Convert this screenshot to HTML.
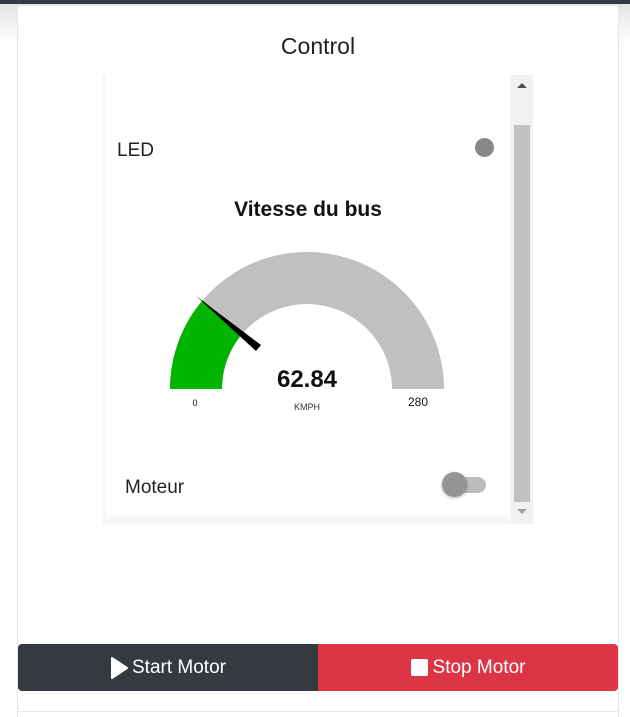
<!DOCTYPE html>
<html><head><style>
html,body{margin:0;height:717px;overflow:hidden}
body{width:630px;background:#fff;font-family:"Liberation Sans",sans-serif;position:relative}
.top{position:absolute;left:0;top:0;width:630px;height:4px;background:#343a40}
.shade{position:absolute;left:0;top:4px;width:630px;height:40px;background:linear-gradient(#e4e4e4,#fff)}
.card{position:absolute;left:17px;top:5px;width:600px;height:706px;background:#fff;border:1px solid #e5e5e5;border-bottom:none;border-radius:4px 4px 0 0}
.t{position:absolute;left:0;width:636px;top:33px;text-align:center;font-size:23px;color:#222}
.w{position:absolute;left:102px;top:75px;width:431px;height:449px;background:#f8f8f8}
.wi{position:absolute;left:106px;top:75px;width:404px;height:441px;background:#fff}
.sb{position:absolute;left:511px;top:75px;width:22px;height:449px;background:#f1f1f1}
.th{position:absolute;left:514px;top:125px;width:16px;height:377px;background:#c1c1c1}
.lab{position:absolute;font-size:19px;color:#222}
.btn{position:absolute;top:644px;height:47px;color:#fff;font-size:19px;display:flex;align-items:center;justify-content:center}
</style></head><body>
<div class="shade"></div><div class="top"></div>
<div class="card"></div>
<div class="t">Control</div>
<div class="w"></div><div class="wi"></div>
<div class="sb"></div><div class="th"></div>
<div style="position:absolute;left:517px;top:83px;width:0;height:0;border-left:5px solid transparent;border-right:5px solid transparent;border-bottom:5px solid #505050"></div>
<div style="position:absolute;left:517px;top:509px;width:0;height:0;border-left:5px solid transparent;border-right:5px solid transparent;border-top:5px solid #a0a0a0"></div>
<div class="lab" style="left:117px;top:140px">LED</div>
<div style="position:absolute;left:475px;top:138px;width:19px;height:19px;border-radius:50%;background:#888"></div>
<div style="position:absolute;left:106px;width:404px;top:198px;text-align:center;font-size:21px;font-weight:bold;color:#111">Vitesse du bus</div>
<svg style="position:absolute;left:0;top:0" width="630" height="717">
<path d="M170 389 A137 137 0 0 1 444 389 L392 389 A85 85 0 0 0 222 389 Z" fill="#c0c0c0"/>
<path d="M170 389 A137 137 0 0 1 202.6 300.2 L242.2 333.9 A85 85 0 0 0 222 389 Z" fill="#00b400"/>
<polygon points="196,296 261,345 256,351" fill="#000"/>
<text x="307" y="387" text-anchor="middle" font-size="24" font-weight="bold" fill="#111" font-family="Liberation Sans">62.84</text>
<text x="307" y="410" text-anchor="middle" font-size="9" fill="#333" font-family="Liberation Sans">KMPH</text>
<text x="195" y="406" text-anchor="middle" font-size="9" fill="#111" font-family="Liberation Sans">0</text>
<text x="418" y="406" text-anchor="middle" font-size="12" fill="#111" font-family="Liberation Sans">280</text>
</svg>
<div class="lab" style="left:125px;top:477px">Moteur</div>
<div style="position:absolute;left:446px;top:477px;width:40px;height:16px;border-radius:8px;background:#bdbdbd"></div>
<div style="position:absolute;left:442px;top:472px;width:25px;height:25px;border-radius:50%;background:#949494;box-shadow:0 1px 3px rgba(0,0,0,.3)"></div>
<div class="btn" style="left:18px;width:300px;background:#343a40;border-radius:4px 0 0 4px"><svg width="18" height="22" style="margin-right:4px"><path d="M2 1 L17 11 L2 21 Z" fill="#fff" stroke="#fff" stroke-linejoin="round" stroke-width="2"/></svg>Start Motor</div>
<div class="btn" style="left:318px;width:300px;background:#dc3545;border-radius:0 4px 4px 0"><span style="display:inline-block;width:17px;height:17px;background:#fff;border-radius:2px;margin-right:5px"></span>Stop Motor</div>
<div style="position:absolute;left:17px;top:711px;width:602px;height:1px;background:#e5e5e5"></div>
<div style="position:absolute;left:17px;top:712px;width:1px;height:5px;background:#e5e5e5"></div>
<div style="position:absolute;left:618px;top:712px;width:1px;height:5px;background:#e5e5e5"></div>
</body></html>
